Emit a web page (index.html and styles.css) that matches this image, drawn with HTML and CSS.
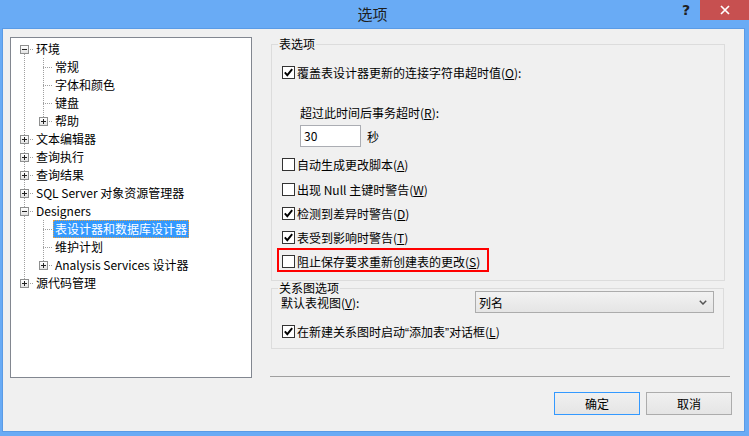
FILE: index.html
```html
<!DOCTYPE html>
<html lang="zh-CN">
<head>
<meta charset="utf-8">
<title>选项</title>
<link rel="stylesheet" href="styles.css">
</head>
<body>
<div class="titlebar">
  <div></div>
  <div class="title">选项</div>
  <div class="tb-buttons">
    <span class="help">?</span>
    <span class="close"><svg width="10" height="10" viewBox="0 0 10 10"><path d="M1 1L9 9M9 1L1 9" stroke="#fff" stroke-width="1.7" fill="none"/></svg></span>
  </div>
</div>
<div class="client">
  <div class="main">
    <div class="tree">
      <div class="row"><span class="c first"><span class="exp minus"></span></span><span class="lbl">环境</span></div>
      <div class="row"><span class="c pipe"></span><span class="c tee"></span><span class="lbl">常规</span></div>
      <div class="row"><span class="c pipe"></span><span class="c tee"></span><span class="lbl">字体和颜色</span></div>
      <div class="row"><span class="c pipe"></span><span class="c tee"></span><span class="lbl">键盘</span></div>
      <div class="row"><span class="c pipe"></span><span class="c ell"><span class="exp plus"></span></span><span class="lbl">帮助</span></div>
      <div class="row"><span class="c tee"><span class="exp plus"></span></span><span class="lbl">文本编辑器</span></div>
      <div class="row"><span class="c tee"><span class="exp plus"></span></span><span class="lbl">查询执行</span></div>
      <div class="row"><span class="c tee"><span class="exp plus"></span></span><span class="lbl">查询结果</span></div>
      <div class="row"><span class="c tee"><span class="exp plus"></span></span><span class="lbl">SQL Server 对象资源管理器</span></div>
      <div class="row"><span class="c tee"><span class="exp minus"></span></span><span class="lbl">Designers</span></div>
      <div class="row"><span class="c pipe"></span><span class="c tee"></span><span class="lbl sel">表设计器和数据库设计器</span></div>
      <div class="row"><span class="c pipe"></span><span class="c tee"></span><span class="lbl">维护计划</span></div>
      <div class="row"><span class="c pipe"></span><span class="c ell"><span class="exp plus"></span></span><span class="lbl">Analysis Services 设计器</span></div>
      <div class="row"><span class="c ell"><span class="exp plus"></span></span><span class="lbl">源代码管理</span></div>
    </div>
    <div class="right">
      <fieldset class="group g1">
        <legend>表选项</legend>
        <div class="gbody b1">
          <div class="opt"><span class="cb"><svg width="11" height="11" viewBox="0 0 11 11"><path d="M1.8 5.4L4.3 8.2L9.2 2.2" stroke="#000" stroke-width="1.9" fill="none"/></svg></span><span>覆盖表设计器更新的连接字符串超时值(<u>O</u>):</span></div>
          <div class="timeout-label">超过此时间后事务超时(<u>R</u>):</div>
          <div class="timeout"><span class="textbox">30</span><span>秒</span></div>
          <div class="opt2 first-opt"><span class="cb"></span><span>自动生成更改脚本(<u>A</u>)</span></div>
          <div class="opt2 second-opt"><span class="cb"></span><span>出现 Null 主键时警告(<u>W</u>)</span></div>
          <div class="opt2"><span class="cb"><svg width="11" height="11" viewBox="0 0 11 11"><path d="M1.8 5.4L4.3 8.2L9.2 2.2" stroke="#000" stroke-width="1.9" fill="none"/></svg></span><span>检测到差异时警告(<u>D</u>)</span></div>
          <div class="opt2"><span class="cb"><svg width="11" height="11" viewBox="0 0 11 11"><path d="M1.8 5.4L4.3 8.2L9.2 2.2" stroke="#000" stroke-width="1.9" fill="none"/></svg></span><span>表受到影响时警告(<u>T</u>)</span></div>
          <div class="opt2 marked"><span class="cb"></span><span>阻止保存要求重新创建表的更改(<u>S</u>)</span></div>
        </div>
      </fieldset>
      <fieldset class="group g2">
        <legend>关系图选项</legend>
        <div class="gbody b2">
          <div class="combo-row">
            <span class="combo-label">默认表视图(<u>V</u>):</span>
            <span class="combo"><span>列名</span><svg width="8" height="5" viewBox="0 0 8 5"><path d="M0.8 0.8L4 4L7.2 0.8" stroke="#555" stroke-width="1.5" fill="none"/></svg></span>
          </div>
          <div class="opt diag"><span class="cb"><svg width="11" height="11" viewBox="0 0 11 11"><path d="M1.8 5.4L4.3 8.2L9.2 2.2" stroke="#000" stroke-width="1.9" fill="none"/></svg></span><span>在新建关系图时启动<span class="q">“</span>添加表<span class="q">”</span>对话框(<u>L</u>)</span></div>
        </div>
      </fieldset>
      <div class="spacer"></div>
      <div class="sep"></div>
    </div>
  </div>
  <div class="buttons">
    <span class="btn default">确定</span>
    <span class="btn">取消</span>
  </div>
</div>
</body>
</html>
```
FILE: styles.css
```css
* { box-sizing: border-box; }
html, body { margin: 0; padding: 0; }
body {
  width: 749px;
  height: 436px;
  overflow: hidden;
  background: #69abf5;
  font-family: "Noto Sans CJK SC", "Noto Sans", sans-serif;
  font-size: 12px;
  color: #000;
}
u { text-decoration: underline; text-underline-offset: 1px; }

.titlebar {
  height: 28px;
  display: grid;
  grid-template-columns: 1fr auto 1fr;
  align-items: start;
}
.title {
  font-size: 15px;
  line-height: 28px;
  color: #1e1e1e;
  margin-right: 4px;
}
.tb-buttons { display: flex; justify-content: flex-end; }
.help {
  width: 30px;
  height: 20px;
  font: bold 14px/21px "DejaVu Sans", sans-serif;
  text-align: center;
  color: #202020;
  padding-left: 2px;
}
.close {
  width: 49px;
  height: 20px;
  background: #c75050;
  display: flex;
  align-items: center;
  justify-content: center;
}

.client {
  margin-left: 2px;
  width: 743px;
  height: 404px;
  background: #f0f0f0;
  border: 1px solid #5a9be6;
  display: flex;
  flex-direction: column;
}
.main { display: flex; padding: 8px 0 0 7px; }

.tree {
  width: 242px;
  height: 341px;
  flex: none;
  border: 1px solid #828790;
  background: #fff;
  padding: 2px 0 0 5px;
}
.row { display: flex; height: 18px; line-height: 18px; white-space: nowrap; }
.c {
  width: 19px;
  height: 18px;
  flex: none;
  background-repeat: no-repeat;
}
.pipe {
  background-image: repeating-linear-gradient(to bottom, #a0a0a0 0 1px, transparent 1px 2px);
  background-position: 8px 0;
  background-size: 1px 18px;
}
.tee {
  background-image: repeating-linear-gradient(to bottom, #a0a0a0 0 1px, transparent 1px 2px),
                    repeating-linear-gradient(to right, #a0a0a0 0 1px, transparent 1px 2px);
  background-position: 8px 0, 8px 9px;
  background-size: 1px 18px, 10px 1px;
}
.ell {
  background-image: repeating-linear-gradient(to bottom, #a0a0a0 0 1px, transparent 1px 2px),
                    repeating-linear-gradient(to right, #a0a0a0 0 1px, transparent 1px 2px);
  background-position: 8px 0, 8px 9px;
  background-size: 1px 10px, 10px 1px;
}
.first {
  background-image: repeating-linear-gradient(to bottom, #a0a0a0 0 1px, transparent 1px 2px),
                    repeating-linear-gradient(to right, #a0a0a0 0 1px, transparent 1px 2px);
  background-position: 8px 10px, 8px 9px;
  background-size: 1px 8px, 10px 1px;
}
.exp {
  display: block;
  width: 9px;
  height: 9px;
  margin: 5px 0 0 4px;
  border: 1px solid #8e8f8f;
}
.exp.minus {
  background: linear-gradient(#222, #222) 1px 3px / 5px 1px no-repeat,
              linear-gradient(#fff, #e3e3e3);
}
.exp.plus {
  background: linear-gradient(#222, #222) 1px 3px / 5px 1px no-repeat,
              linear-gradient(#222, #222) 3px 1px / 1px 5px no-repeat,
              linear-gradient(#fff, #e3e3e3);
}
.lbl { padding: 0 2px; margin-left: -1px; height: 18px; }
.lbl.sel {
  background: #3399ff;
  color: #fff;
  outline: 1px dotted #e8a040;
  outline-offset: -1px;
}

.right {
  margin-left: 19px;
  width: 459px;
  height: 340px;
  display: flex;
  flex-direction: column;
}
fieldset.group {
  margin: 0;
  padding: 0;
  border: 1px solid #dcdcdc;
  min-width: 0;
}
legend {
  margin-left: 6px;
  padding: 0 1px;
  font-size: 12px;
  line-height: 14px;
}
.g1 { width: 454px; }
.g2 { width: 453px; margin-top: 3px; }
.b1 { padding: 11px 0 8px 10px; }
.b2 { padding: 0 9px 7px 9px; }

.cb {
  width: 13px;
  height: 13px;
  flex: none;
  border: 1px solid #333;
  background: #fff;
  display: flex;
  align-items: center;
  justify-content: center;
}
.opt { display: flex; align-items: center; gap: 2px; height: 20px; white-space: nowrap; }
.opt2 { display: flex; align-items: center; gap: 2px; height: 24px; white-space: nowrap; }
.first-opt { margin-top: 5px; }
.second-opt { margin-top: 1px; }
.marked {
  width: 212px;
  margin: -1px 0 0 -5px;
  border: 2px solid #f00;
  padding: 3px 0 0 3px;
}
.timeout-label { margin: 22px 0 0 18px; line-height: 18px; }
.timeout { display: flex; align-items: center; gap: 6px; margin: 3px 0 0 18px; }
.textbox {
  width: 61px;
  height: 22px;
  border: 1px solid #abadb3;
  background: #fff;
  padding-left: 3px;
  line-height: 20px;
}
.q { font-family: "Liberation Sans", sans-serif; }

.combo-row {
  display: flex;
  justify-content: space-between;
  align-items: center;
  margin-top: -4px;
  height: 22px;
}
.combo-label { line-height: 12px; margin-top: 1px; }
.combo {
  width: 239px;
  height: 22px;
  border: 1px solid #acacac;
  background: linear-gradient(#f2f2f2, #e5e5e5);
  display: flex;
  align-items: center;
  justify-content: space-between;
  padding: 0 6px 0 3px;
}
.diag { margin: 8px 0 0 1px; }

.spacer { flex: 1; }
.sep { width: 460px; height: 1px; margin-left: -1px; background: #a0a0a0; }

.buttons {
  display: flex;
  justify-content: flex-end;
  gap: 6px;
  margin-top: 14px;
  padding-right: 12px;
}
.btn {
  width: 86px;
  height: 23px;
  border: 1px solid #acacac;
  background: linear-gradient(#f0f0f0, #e5e5e5);
  display: flex;
  align-items: center;
  justify-content: center;
}
.btn.default { border-color: #3399ff; }
```
